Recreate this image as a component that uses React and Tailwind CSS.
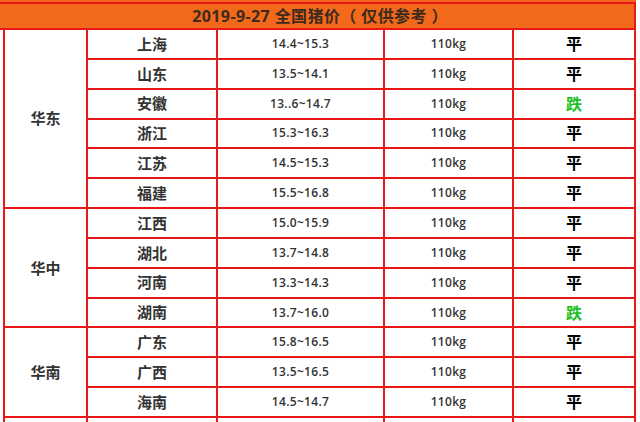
const groups = [
  {
    region: "华东",
    rows: [
      ["上海", "14.4~15.3", "平"],
      ["山东", "13.5~14.1", "平"],
      ["安徽", "13..6~14.7", "跌"],
      ["浙江", "15.3~16.3", "平"],
      ["江苏", "14.5~15.3", "平"],
      ["福建", "15.5~16.8", "平"],
    ],
  },
  {
    region: "华中",
    rows: [
      ["江西", "15.0~15.9", "平"],
      ["湖北", "13.7~14.8", "平"],
      ["河南", "13.3~14.3", "平"],
      ["湖南", "13.7~16.0", "跌"],
    ],
  },
  {
    region: "华南",
    rows: [
      ["广东", "15.8~16.5", "平"],
      ["广西", "13.5~16.5", "平"],
      ["海南", "14.5~14.7", "平"],
    ],
  },
];

const font = { fontFamily: '"Open Sans", "Noto Sans CJK SC", sans-serif' };

export default function App() {
  return (
    <div className="h-[422px] w-[640px] overflow-hidden bg-white" style={font}>
      <div className="h-[2px] w-[636px] bg-[#f2691c]" />
      <div className="flex h-[28px] w-[636px] items-center justify-center border-y-2 border-r-2 border-[#e81818] bg-[#f2691c] pl-[6px] text-[16px] font-bold tracking-[0.4px] text-[#3d2a1c]">
        2019-9-27 全国猪价（ 仅供参考 ）
      </div>

      <div className="ml-[3px] w-[633px] border-l-2 border-[#e81818]">
        {groups.map((group) => (
          <div key={group.region} className="flex">
            <div className="flex w-[83px] shrink-0 items-center justify-center border-r-2 border-b-2 border-[#e81818] text-[15px] font-bold text-[#333]">
              {group.region}
            </div>
            <div className="flex-1">
              {group.rows.map(([name, price, trend]) => (
                <div key={name} className="flex h-[29.85px]">
                  <div className="flex w-[130px] items-center justify-center border-r-2 border-b-2 border-[#e81818] text-[15px] font-bold text-[#333]">
                    {name}
                  </div>
                  <div className="flex w-[167px] items-center justify-center border-r-2 border-b-2 border-[#e81818] text-[12px] font-semibold tracking-[0.3px] text-[#333]">
                    {price}
                  </div>
                  <div className="flex w-[129px] items-center justify-center border-r-2 border-b-2 border-[#e81818] text-[12px] font-semibold tracking-[0.3px] text-[#333]">
                    110kg
                  </div>
                  <div
                    className={`flex w-[122px] items-center justify-center border-r-2 border-b-2 border-[#e81818] text-[16px] font-bold ${
                      trend === "跌" ? "text-[#1fbf1f]" : "text-black"
                    }`}
                  >
                    {trend}
                  </div>
                </div>
              ))}
            </div>
          </div>
        ))}
        <div className="flex h-[10px]">
          <div className="w-[83px] border-r-2 border-[#e81818]" />
          <div className="w-[130px] border-r-2 border-[#e81818]" />
          <div className="w-[167px] border-r-2 border-[#e81818]" />
          <div className="w-[129px] border-r-2 border-[#e81818]" />
          <div className="w-[122px] border-r-2 border-[#e81818]" />
        </div>
      </div>
    </div>
  );
}
